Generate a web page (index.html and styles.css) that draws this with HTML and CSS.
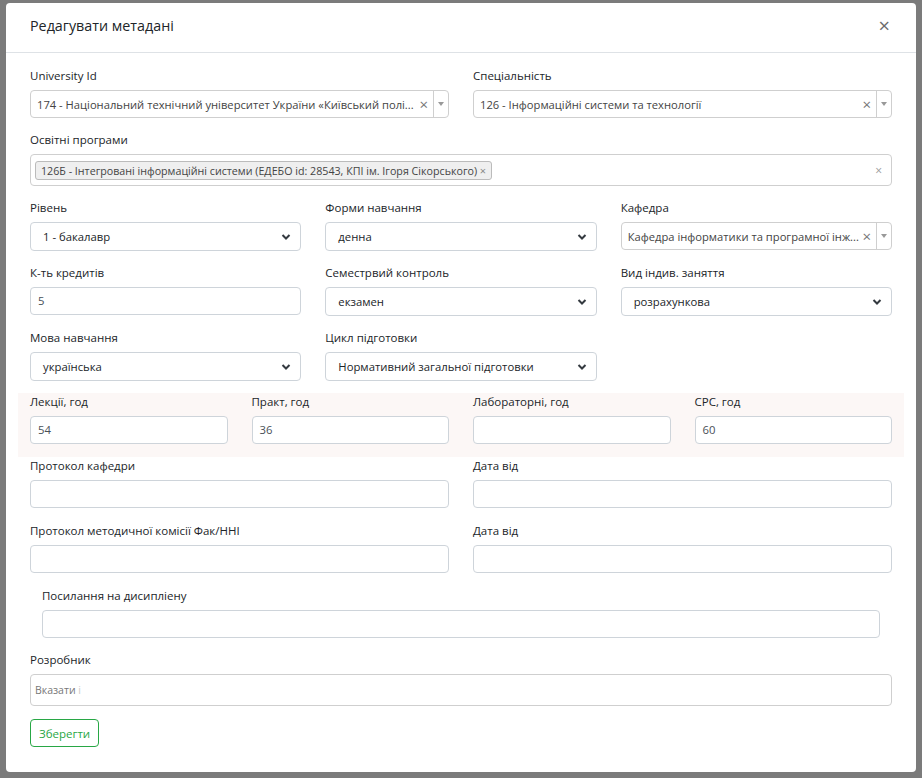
FILE: index.html
```html
<!DOCTYPE html>
<html lang="uk">
<head>
<meta charset="utf-8">
<title>Редагувати метадані</title>
<link rel="stylesheet" href="styles.css">
</head>
<body>
<div class="modal">
  <div class="modal-header">
    <h5 class="modal-title">Редагувати метадані</h5>
    <span class="close">×</span>
  </div>
  <div class="modal-body">
    <div class="row">
      <div class="col col-6">
        <label class="lbl">University Id</label>
        <div class="s2">
          <span class="s2-text">174 - Національний технічний університет України «Київський полі...</span>
          <span class="s2-clear">×</span>
          <span class="s2-arrow"><span class="tri"></span></span>
        </div>
      </div>
      <div class="col col-6">
        <label class="lbl">Спеціальність</label>
        <div class="s2">
          <span class="s2-text">126 - Інформаційні системи та технології</span>
          <span class="s2-clear">×</span>
          <span class="s2-arrow"><span class="tri"></span></span>
        </div>
      </div>
    </div>

    <div class="group">
      <label class="lbl">Освітні програми</label>
      <div class="s2-multi">
        <span class="tag">126Б - Інтегровані інформаційні системи (ЕДЕБО id: 28543, КПІ ім. Ігоря Сікорського) <span class="tag-x">×</span></span>
        <span class="multi-clear">×</span>
      </div>
    </div>

    <div class="row">
      <div class="col col-4">
        <label class="lbl">Рівень</label>
        <div class="sel"><span>1 - бакалавр</span><svg class="chev" viewBox="0 0 10 8" width="10" height="8"><path d="M1.5 2 L5 5.5 L8.5 2" fill="none" stroke="#343a40" stroke-width="2"/></svg></div>
      </div>
      <div class="col col-4">
        <label class="lbl">Форми навчання</label>
        <div class="sel"><span>денна</span><svg class="chev" viewBox="0 0 10 8" width="10" height="8"><path d="M1.5 2 L5 5.5 L8.5 2" fill="none" stroke="#343a40" stroke-width="2"/></svg></div>
      </div>
      <div class="col col-4">
        <label class="lbl">Кафедра</label>
        <div class="s2">
          <span class="s2-text">Кафедра інформатики та програмної інж...</span>
          <span class="s2-clear tight">×</span>
          <span class="s2-arrow"><span class="tri"></span></span>
        </div>
      </div>
    </div>

    <div class="row">
      <div class="col col-4">
        <label class="lbl">К-ть кредитів</label>
        <div class="inp">5</div>
      </div>
      <div class="col col-4">
        <label class="lbl">Семестрвий контроль</label>
        <div class="sel"><span>екзамен</span><svg class="chev" viewBox="0 0 10 8" width="10" height="8"><path d="M1.5 2 L5 5.5 L8.5 2" fill="none" stroke="#343a40" stroke-width="2"/></svg></div>
      </div>
      <div class="col col-4">
        <label class="lbl">Вид індив. заняття</label>
        <div class="sel"><span>розрахункова</span><svg class="chev" viewBox="0 0 10 8" width="10" height="8"><path d="M1.5 2 L5 5.5 L8.5 2" fill="none" stroke="#343a40" stroke-width="2"/></svg></div>
      </div>
    </div>

    <div class="row snug">
      <div class="col col-4">
        <label class="lbl">Мова навчання</label>
        <div class="sel"><span>українська</span><svg class="chev" viewBox="0 0 10 8" width="10" height="8"><path d="M1.5 2 L5 5.5 L8.5 2" fill="none" stroke="#343a40" stroke-width="2"/></svg></div>
      </div>
      <div class="col col-4">
        <label class="lbl">Цикл підготовки</label>
        <div class="sel"><span>Нормативний загальної підготовки</span><svg class="chev" viewBox="0 0 10 8" width="10" height="8"><path d="M1.5 2 L5 5.5 L8.5 2" fill="none" stroke="#343a40" stroke-width="2"/></svg></div>
      </div>
    </div>

    <div class="row pink">
      <div class="col col-3">
        <label class="lbl">Лекції, год</label>
        <div class="inp">54</div>
      </div>
      <div class="col col-3">
        <label class="lbl">Практ, год</label>
        <div class="inp">36</div>
      </div>
      <div class="col col-3">
        <label class="lbl">Лабораторні, год</label>
        <div class="inp"></div>
      </div>
      <div class="col col-3">
        <label class="lbl">СРС, год</label>
        <div class="inp">60</div>
      </div>
    </div>

    <div class="row loose">
      <div class="col col-6">
        <label class="lbl">Протокол кафедри</label>
        <div class="inp"></div>
      </div>
      <div class="col col-6">
        <label class="lbl">Дата від</label>
        <div class="inp"></div>
      </div>
    </div>

    <div class="row loose">
      <div class="col col-6">
        <label class="lbl">Протокол методичної комісії Фак/ННІ</label>
        <div class="inp"></div>
      </div>
      <div class="col col-6">
        <label class="lbl">Дата від</label>
        <div class="inp"></div>
      </div>
    </div>

    <div class="group inset">
      <label class="lbl">Посилання на дисипліену</label>
      <div class="inp"></div>
    </div>

    <div class="group">
      <label class="lbl">Розробник</label>
      <div class="dev"><span class="ph">Вказати <span class="ph-fade">і</span></span></div>
    </div>

    <button class="btn-save" type="button">Зберегти</button>
  </div>
</div>
</body>
</html>
```

FILE: styles.css
```css
* { box-sizing: border-box; }

html, body {
  margin: 0;
  height: 100%;
}

body {
  background: #7b7b7b;
  padding: 3px 6px 6px 6px;
  font-family: "Open Sans", "Noto Sans", "DejaVu Sans", sans-serif;
  font-size: 11.5px;
  color: #212529;
}

.modal {
  width: 910px;
  background: #fff;
  border-radius: 4px;
}

.modal-header {
  display: flex;
  align-items: center;
  justify-content: space-between;
  padding: 11px 26px 14px 24px;
  border-bottom: 1px solid #dee2e6;
}

.modal-title {
  margin: 0;
  font-size: 14.3px;
  font-weight: 500;
  line-height: 24px;
  color: #212529;
}

.close {
  font-size: 20px;
  line-height: 24px;
  color: #6c6c6c;
}

.modal-body {
  padding: 14px 24px 25px 24px;
}

.row {
  display: flex;
  margin: 0 -12px;
}

.col {
  padding: 0 12px;
  margin-bottom: 13px;
}

.row.snug .col {
  margin-bottom: 12px;
}

.row.loose .col {
  margin-bottom: 14px;
}

.col-6 { width: 50%; }
.col-4 { width: 33.3333%; }
.col-3 { width: 25%; }

.pink {
  background: #fcf7f6;
}

.group {
  margin-bottom: 13px;
}

.group.inset {
  padding: 0 12px;
}

.lbl {
  display: block;
  line-height: 18px;
  margin-bottom: 5px;
  font-size: 11.5px;
  color: #212529;
}

.inp {
  height: 28px;
  border: 1px solid #ced4da;
  border-radius: 4px;
  padding: 0 7px;
  line-height: 26px;
  font-size: 11.3px;
  color: #495057;
  background: #fff;
}

.sel {
  height: 29px;
  display: flex;
  align-items: center;
  justify-content: space-between;
  border: 1px solid #ced4da;
  border-radius: 4px;
  padding: 0 9px 0 12px;
  font-size: 11.3px;
  color: #212529;
  background: #fff;
  white-space: nowrap;
}

.chev { flex: none; }

.s2 {
  height: 28px;
  display: flex;
  align-items: center;
  border: 1px solid #cfcfcf;
  border-radius: 4px;
  background: #fff;
  font-size: 11.2px;
  color: #444;
}

.s2-text {
  flex: 1;
  padding-left: 6px;
  white-space: nowrap;
  overflow: hidden;
  text-overflow: ellipsis;
}

.s2-clear {
  flex: none;
  color: #777;
  font-size: 15px;
  line-height: 1;
  padding: 0 5px 0 4px;
}

.s2-clear.tight { padding-left: 1px; }

.s2-arrow {
  flex: none;
  width: 15px;
  height: 26px;
  border-left: 1px solid #cfcfcf;
  display: flex;
  align-items: center;
  justify-content: center;
}

.tri {
  width: 0;
  height: 0;
  border-left: 3px solid transparent;
  border-right: 3px solid transparent;
  border-top: 4px solid #999;
}

.s2-multi {
  height: 32px;
  display: flex;
  align-items: center;
  justify-content: space-between;
  border: 1px solid #cfcfcf;
  border-radius: 4px;
  padding: 0 9px 0 4px;
  background: #fff;
}

.tag {
  display: inline-block;
  height: 19px;
  line-height: 17px;
  padding: 0 5px 0 5px;
  border: 1px solid #bbb;
  border-radius: 3px;
  background: #efefef;
  font-size: 10.7px;
  color: #444;
  white-space: nowrap;
}

.tag-x {
  color: #888;
  font-size: 11px;
}

.multi-clear {
  color: #999;
  font-size: 12px;
}

.dev {
  height: 32px;
  display: flex;
  align-items: center;
  border: 1px solid #cfcfcf;
  border-radius: 4px;
  padding: 0 4px;
  background: #fff;
}

.ph {
  font-size: 10.5px;
  color: #777;
}

.ph-fade { color: #ccc; }

.btn-save {
  height: 28px;
  padding: 0 8px;
  border: 1px solid #28a745;
  border-radius: 4px;
  background: #fff;
  color: #28a745;
  font-family: "Open Sans", "Noto Sans", sans-serif;
  font-size: 11.5px;
}
```
